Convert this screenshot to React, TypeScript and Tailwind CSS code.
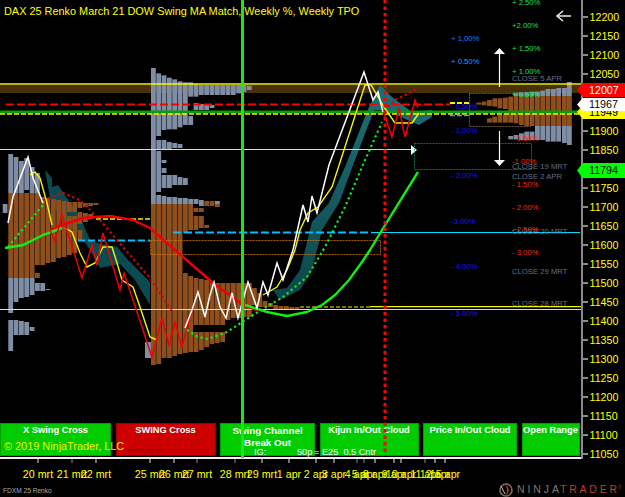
import React from "react";

type Seg = [number, number, string];
const GRAY = "#7f8ea5";
const BROWN = "#8f4f1d";

const z1 = (v: number) => v / 3;

const leftProfile: [number, Seg[]][] = [
  [2.7, [[204, 213, GRAY]]],
  [8.3, [[154, 193, GRAY], [193, 278, BROWN], [278, 313, GRAY], [320, 351, GRAY]]],
  [13.6, [[157, 193, GRAY], [193, 278, BROWN], [278, 302, GRAY], [320, 335, GRAY]]],
  [19, [[161, 193, GRAY], [193, 278, BROWN], [278, 298, GRAY], [321, 335, GRAY]]],
  [24.3, [[158, 190, GRAY], [193, 278, BROWN], [278, 297, GRAY], [322, 335, GRAY]]],
  [29.7, [[167, 193, GRAY], [193, 278, BROWN], [278, 295, GRAY], [327, 331, GRAY]]],
  [35, [[173, 193, GRAY], [193, 265, BROWN], [273, 278, BROWN], [283, 291, GRAY]]],
  [40.3, [[197, 265, BROWN], [283, 291, GRAY]]],
  [45.6, [[198, 263, BROWN], [289, 290, GRAY]]],
  [51, [[199, 262, BROWN]]],
  [56.3, [[200, 258, BROWN]]],
  [61.7, [[201, 257, BROWN]]],
  [67, [[202, 212, BROWN], [216, 255, BROWN]]],
  [72.3, [[202, 212, BROWN], [216, 253, BROWN]]],
  [77.6, [[202, 208, BROWN], [212, 224, BROWN], [230, 240, BROWN]]],
  [83, [[203, 207, BROWN], [213, 222, BROWN]]],
  [88.3, [[203, 206, BROWN], [214, 219, BROWN]]],
  [93.6, [[203, 205, BROWN], [216, 218, BROWN]]],
];

const midTopBots: [number, number][] = [
  [220, 408], [226, 390], [233, 388], [238, 388], [244, 382], [247, 375], [247, 290], [252, 290], [255, 285],
  [255, 285], [255, 285], [255, 285], [255, 285], [255, 285], [255, 285], [255, 280], [255, 276], [257, 270],
];

const midCols: [number, Seg[]][] = [
  [151, [[68, 204, GRAY], [204, 365, BROWN]]],
  ...midTopBots.map(([t, b], i): [number, Seg[]] => {
    const x = 156.3 + i * 5.33;
    const segs: Seg[] = [[z1(t), z1(b), GRAY]];
    return [x, segs];
  }),
];

const midExtra: [number, number, number, string][] = [
  [1, 140, 149, GRAY], [1, 151, 192, GRAY], [1, 195, 204, GRAY], [1, 204, 364, BROWN],
  [2, 140, 149, GRAY], [2, 160, 163, GRAY], [2, 168, 173, GRAY], [2, 175, 188, GRAY], [2, 196, 204, GRAY], [2, 204, 358, BROWN],
  [3, 142, 149, GRAY], [3, 175, 188, GRAY], [3, 197, 204, GRAY], [3, 204, 358, BROWN],
  [4, 143, 148, GRAY], [4, 175, 185, GRAY], [4, 197, 204, GRAY], [4, 204, 262, BROWN], [4, 262, 356, BROWN],
  [5, 144, 148, GRAY], [5, 177, 185, GRAY], [5, 198, 204, GRAY], [5, 204, 262, BROWN], [5, 262, 354, BROWN],
  [6, 178, 185, GRAY], [6, 198, 204, GRAY], [6, 204, 233, BROWN], [6, 273, 353, BROWN],
  [7, 116, 125, GRAY], [7, 199, 204, GRAY], [7, 204, 230, BROWN], [7, 276, 352, BROWN],
  [8, 103, 110, GRAY], [8, 199, 204, GRAY], [8, 208, 212, BROWN], [8, 216, 230, BROWN], [8, 278, 325, BROWN], [8, 332, 352, BROWN],
  [9, 104, 110, GRAY], [9, 200, 206, GRAY], [9, 208, 212, BROWN], [9, 216, 228, BROWN], [9, 279, 325, BROWN], [9, 332, 350, BROWN],
  [10, 105, 110, GRAY], [10, 201, 206, BROWN], [10, 225, 228, BROWN], [10, 280, 325, BROWN], [10, 332, 347, BROWN],
  [11, 105, 108, GRAY], [11, 201, 206, BROWN], [11, 282, 325, BROWN], [11, 332, 344, BROWN],
  [12, 201, 204, GRAY], [12, 204, 207, BROWN], [12, 283, 325, BROWN], [12, 332, 343, BROWN],
  [13, 283, 325, BROWN], [13, 332, 342, BROWN],
  [14, 283, 320, BROWN], [15, 283, 318, BROWN], [16, 283, 318, BROWN], [17, 283, 317, BROWN], [18, 283, 317, BROWN],
];
const midTail: [number, number, number][] = [
  [246.6, 285, 310], [252, 288, 305], [257.3, 293, 307], [262.6, 301, 307], [268, 303, 307], [273.3, 305, 309], [278.6, 306, 309], [284, 306, 309], [289.3, 307, 309], [294.6, 307, 309],
];

const rightCols: [number, number, number, number, number, number, number][] = [
  [567, 82, 96, 96, 126, 126, 145],
  [562, 88, 96, 96, 126, 126, 143],
  [556.3, 88, 96, 96, 126, 126, 141.6],
  [551, 89, 96, 96, 126, 126, 141.6],
  [545.6, 89, 96, 96, 126, 126, 141.6],
  [540.3, 90.6, 96, 96, 126, 126, 140],
  [535, 91.6, 96, 96, 126, 126, 140],
  [529.6, 91.6, 96, 96, 126, 131.6, 140],
  [524.3, 92.3, 96, 96, 126, 131.6, 140],
  [519, 92.3, 96, 96, 125, 133.3, 140],
  [513.6, 92.6, 96, 96, 123.3, 135, 139.3],
  [508.3, 0, 0, 96.6, 122.6, 136, 139.3],
];

const rightBrown: [number, number, number, number, number][] = [
  [503, 97.6, 109, 114, 122.6],
  [497.6, 98.3, 108.3, 115, 122.6],
  [492.3, 98.3, 106.6, 116.6, 122.6],
  [487, 100, 106, 118.3, 122.6],
  [481.6, 101.6, 105.3, 0, 0],
  [476.3, 102.6, 104.6, 0, 0],
];

const pts = (a: [number, number][]) => a.map(([x, y]) => `${x},${y}`).join(" ");

const whiteLine1: [number, number][] = [[8, 223], [13, 197], [28, 157], [33, 178], [43, 203]];
const whiteLine2: [number, number][] = [[185, 328], [192, 310], [198, 292], [205, 317], [210, 295], [214, 282], [220, 307], [226, 318], [232, 293], [238, 318], [248, 282], [257, 308], [263, 282], [268, 295], [277, 263], [283, 280], [293, 250], [303, 205], [308, 222], [312, 196], [317, 213], [329, 165], [364, 72], [373, 100], [378, 92], [383, 112]];
const yellow1: [number, number][] = [[30, 175], [35, 172], [40, 178], [47, 203], [52, 225]];
const yellow2: [number, number][] = [[65, 228], [72, 232], [80, 253], [87, 267], [95, 263], [103, 247], [112, 247], [117, 263], [122, 280], [133, 287], [140, 307], [150, 337], [157, 340]];
const yellow3: [number, number][] = [[263, 295], [277, 287], [287, 270], [295, 250], [300, 230], [308, 213], [318, 207], [332, 187], [365, 85], [371, 85], [384, 107], [395, 123], [412, 123], [419, 113]];
const redZig1: [number, number][] = [[50, 230], [55, 242], [62, 215], [70, 240], [82, 278], [92, 245], [97, 265], [103, 233], [117, 280], [120, 290], [124, 273], [152, 357], [162, 318], [169, 345], [175, 322], [182, 347], [192, 310]];
const redZig2: [number, number][] = [[384, 113], [392, 137], [399, 108], [405, 137], [415, 100], [418, 108]];
const redCurve: [number, number][] = [[50, 230], [62, 225], [83, 218], [110, 216], [133, 220], [150, 228], [160, 237], [175, 250], [213, 283], [243, 305], [257, 310]];
const green1: [number, number][] = [[5, 248], [23, 245], [43, 235], [62, 228]];
const green2: [number, number][] = [[245, 305], [267, 312], [287, 316], [307, 312], [322, 305], [335, 295], [349, 280], [362, 262], [370, 250], [382, 230], [418, 172]];
const redDots: [number, number][] = [[43, 200], [63, 193], [80, 200], [100, 220], [123, 247], [150, 278], [173, 313]];
const redDots2: [number, number][] = [[388, 107], [395, 100], [405, 95], [417, 89]];
const greenDots1: [number, number][] = [[8, 247], [43, 205]];
const greenDots2: [number, number][] = [[187, 330], [198, 337], [208, 339], [227, 332], [253, 315], [283, 297], [307, 277], [325, 247], [345, 207], [362, 167], [382, 122]];

const tealLeft: [number, number][] = [[45, 170], [52, 178], [52, 187], [58, 185], [80, 217], [90, 240], [97, 243], [117, 247], [128, 260], [150, 282], [150, 305], [135, 280], [120, 264], [100, 268], [90, 250], [78, 232], [62, 222], [50, 198]];
const tealRight: [number, number][] = [[273, 290], [287, 288], [300, 270], [312, 222], [329, 203], [345, 167], [369, 107], [380, 85], [392, 97], [412, 112], [432, 110], [432, 117], [419, 125], [385, 110], [374, 110], [355, 160], [339, 203], [322, 230], [312, 270], [300, 290], [280, 300]];

const blueTexts: [string, number, number, string][] = [
  ["+ 1,00%", 451, 41, "#1e7fff"],
  ["+ 0.50%", 451, 64, "#10a5ff"],
  ["- 0.50%", 451, 109, "#1414ff"],
  ["- 1,00%", 451, 133, "#1414ff"],
  ["- 2.00%", 451, 178, "#1414ff"],
  ["-3.00%", 451, 224, "#1414ff"],
  ["- 4.00%", 451, 269, "#1414ff"],
  ["- 5.00%", 451, 315.5, "#1414ff"],
];
const greenTexts: [string, number][] = [["+ 2.50%", 5], ["+2.00%", 28], ["+ 1.50%", 51], ["+ 1.00%", 74], ["+ 0.50%", 97]];
const redTexts: [string, number, number][] = [["-0.50%", 514, 141], ["-1.00%", 512, 164], ["- 1.50%", 512, 187], ["- 2.00%", 512, 210], ["- 2.50%", 512, 232], ["- 3.00%", 512, 255]];
const closeTexts: [string, number][] = [["CLOSE 5 APR", 81], ["CLOSE 19 MRT", 169], ["CLOSE 2 APR", 179], ["CLOSE 20 MRT", 234], ["CLOSE 29 MRT", 274], ["CLOSE 28 MRT", 306]];

const timeLabels: [string, number][] = [
  ["20 mrt", 38], ["21 mrt", 72], ["22 mrt", 96], ["25 mrt", 150], ["26 mrt", 174], ["27 mrt", 197], ["28 mrt", 235], ["29 mrt", 262],
  ["1 apr", 289], ["2 apr", 316], ["3 apr", 334], ["4 apr", 357], ["5 apr", 364], ["8 apr", 375], ["9 apr", 394], ["10 apr", 401], ["11 apr", 425], ["12 apr", 435], ["15 apr", 445],
];
const grayTicks = new Set([72, 197, 235, 357, 364, 425]);

const prices = [12200, 12150, 12100, 12050, 12000, 11950, 11900, 11850, 11800, 11750, 11700, 11650, 11600, 11550, 11500, 11450, 11400, 11350, 11300, 11250, 11200, 11150, 11100, 11050];

const tagShape = "[clip-path:polygon(0_50%,12%_0,100%_0,100%_100%,12%_100%)]";

function Tag({ top, h, bg, fg, text }: { top: string; h: string; bg: string; fg: string; text: string }) {
  return (
    <div className={`absolute left-[577px] ${top} ${h} w-[48px] ${bg} ${fg} ${tagShape} flex items-center pl-[12px] text-[10.7px] leading-none`}>
      {text}
    </div>
  );
}

function Btn({ w, red, children }: { w: string; red?: boolean; children: React.ReactNode }) {
  return (
    <div className={`${w} h-[33px] shrink-0 border whitespace-nowrap ${red ? "bg-[#cc0000] border-[#990000]" : "bg-[#00cc00] border-[#00a000]"} flex flex-col items-center text-white font-bold text-[9.3px] leading-[11px] pt-[1px] text-center`}>
      {children}
    </div>
  );
}

export default function App() {
  return (
    <div className="w-[625px] h-[497px] bg-black relative overflow-hidden font-['Liberation_Sans',Arial,sans-serif] flex flex-col">
      <div className="flex h-[459px] shrink-0">
        <div className="relative w-[581px] h-[459px] shrink-0 border-b-2 border-[#f0f0f0] flex flex-col justify-end pb-[1px]">
          <div className="flex gap-[4.5px]">
            <Btn w="w-[111px]">X Swing Cross</Btn>
            <Btn w="w-[100px]" red>SWING Cross</Btn>
            <Btn w="w-[95px]"><span className="text-[9.8px] leading-[12px]">Swing Channel</span><span className="text-[9.8px] leading-[12px]">Break Out</span></Btn>
            <Btn w="w-[99px]">Kijun In/Out Cloud</Btn>
            <Btn w="w-[94px]">Price In/Out Cloud</Btn>
            <Btn w="w-[58px]">Open Range</Btn>
          </div>
          <svg className="absolute left-0 top-0" width="581" height="458" viewBox="0 0 581 458">
            <defs>
              <linearGradient id="tealGrad" x1="0" y1="0" x2="0" y2="1">
                <stop offset="0" stopColor="#1e7076" />
                <stop offset="1" stopColor="#0c464c" />
              </linearGradient>
            </defs>
            <rect x="0" y="85" width="581" height="8" fill="#4a3008" />

            <polygon points={pts(tealLeft)} fill="#0b4a50" />
            <polygon points={pts(tealRight)} fill="url(#tealGrad)" />

            {leftProfile.map(([x, segs]) =>
              segs.map(([a, b, c], i) => <rect key={`${x}-${i}`} x={x} y={a} width="4.8" height={b - a} fill={c} />)
            )}
            {midCols.map(([x, segs]) =>
              segs.map(([a, b, c], i) => <rect key={`${x}-${i}`} x={x} y={a} width="4.8" height={b - a} fill={c} />)
            )}
            {midExtra.map(([k, a, b, c], i) => (
              <rect key={`e${i}`} x={151 + k * 5.33} y={a} width="4.8" height={b - a} fill={c} />
            ))}
            {midTail.map(([x, a, b], i) => (
              <rect key={`t${i}`} x={x} y={a} width="4.8" height={b - a} fill={BROWN} />
            ))}
            <rect x="145" y="342" width="6" height="16" fill={GRAY} />

            {rightCols.map(([x, gt, gb, bt, bb, lt, lb], i) => (
              <g key={`r${i}`}>
                {gt > 0 && <rect x={x} y={gt} width="4.8" height={gb - gt} fill={GRAY} />}
                <rect x={x} y={bt} width="4.8" height={bb - bt} fill={BROWN} />
                <rect x={x} y={lt} width="4.8" height={lb - lt} fill={GRAY} />
              </g>
            ))}
            {rightBrown.map(([x, a, b, c, d], i) => (
              <g key={`rb${i}`}>
                <rect x={x} y={a} width="4.8" height={b - a} fill={BROWN} />
                {d > 0 && <rect x={x} y={c} width="4.8" height={d - c} fill={BROWN} />}
              </g>
            ))}

            <line x1="0" x2="581" y1="84" y2="84" stroke="#f5f500" strokeWidth="1.6" />
            <line x1="6" x2="450" y1="104.5" y2="104.5" stroke="#ff0000" strokeWidth="2" strokeDasharray="8 3" />
            <line x1="0" x2="581" y1="112" y2="112" stroke="#0a9a0a" strokeWidth="3" />
            <line x1="0" x2="581" y1="114" y2="114" stroke="#f5f500" strokeWidth="1.5" strokeDasharray="5 2" />
            <line x1="450" x2="470" y1="103" y2="103" stroke="#f5f500" strokeWidth="2" strokeDasharray="5 2" />
            <line x1="450" x2="470" y1="115.5" y2="115.5" stroke="#00bfff" strokeWidth="1.6" strokeDasharray="5 2" />
            <line x1="0" x2="412" y1="149.5" y2="149.5" stroke="#d8d8d8" strokeWidth="1.2" />
            <polygon points="411,145 417,150 411,155" fill="#f2f2f2" />
            <line x1="96" x2="150" y1="219" y2="219" stroke="#f5f500" strokeWidth="1.3" strokeDasharray="5 2" />
            <line x1="78" x2="150" y1="240.5" y2="240.5" stroke="#00bfff" strokeWidth="2" strokeDasharray="7 3" />
            <line x1="173" x2="372" y1="232.5" y2="232.5" stroke="#00bfff" strokeWidth="2" strokeDasharray="8 3" />
            <line x1="372" x2="580" y1="232.5" y2="232.5" stroke="#00dfff" strokeWidth="1.2" />
            <rect x="150.5" y="240.5" width="230" height="14" fill="none" stroke="#d97a10" strokeWidth="0.8" strokeDasharray="2 1" />
            <line x1="0" x2="581" y1="309.5" y2="309.5" stroke="#f5f500" strokeWidth="1.2" />
            <line x1="370" x2="581" y1="306.7" y2="306.7" stroke="#f5f500" strokeWidth="1.2" />
            <line x1="300" x2="370" y1="307" y2="307" stroke="#f5f500" strokeWidth="1.2" strokeDasharray="4 2" />

            <rect x="414.5" y="143.5" width="117" height="26" fill="none" stroke="#0c8f6a" strokeWidth="0.8" strokeDasharray="2 1" />
            <rect x="469.5" y="93.5" width="61" height="33" fill="none" stroke="#8a6a55" strokeWidth="0.8" strokeDasharray="2 1" />

            <polyline points={pts(redCurve)} fill="none" stroke="#f00000" strokeWidth="2.4" strokeLinejoin="round" />
            <polyline points={pts(green1)} fill="none" stroke="#11ee11" strokeWidth="2.4" />
            <polyline points={pts(green2)} fill="none" stroke="#11ee11" strokeWidth="2.4" strokeLinejoin="round" />
            <polyline points={pts(yellow1)} fill="none" stroke="#f5f500" strokeWidth="1.4" />
            <polyline points={pts(yellow2)} fill="none" stroke="#f5f500" strokeWidth="1.4" />
            <polyline points={pts(yellow3)} fill="none" stroke="#f5f500" strokeWidth="1.4" />
            <polyline points={pts(redZig1)} fill="none" stroke="#f00000" strokeWidth="1.5" />
            <polyline points={pts(redZig2)} fill="none" stroke="#f00000" strokeWidth="1.5" />
            <polyline points={pts(redDots)} fill="none" stroke="#e00000" strokeWidth="2.2" strokeDasharray="2.2 3" />
            <polyline points={pts(redDots2)} fill="none" stroke="#e00000" strokeWidth="2.2" strokeDasharray="2.2 3" />
            <polyline points={pts(greenDots1)} fill="none" stroke="#11ee11" strokeWidth="2.2" strokeDasharray="2.2 3" />
            <polyline points={pts(greenDots2)} fill="none" stroke="#11ee11" strokeWidth="2.2" strokeDasharray="2.2 3" />
            <polyline points={pts(whiteLine1)} fill="none" stroke="#ffffff" strokeWidth="1.5" />
            <polyline points={pts(whiteLine2)} fill="none" stroke="#ffffff" strokeWidth="1.5" />

            <line x1="242.5" x2="242.5" y1="0" y2="458" stroke="#18e818" strokeWidth="3" />
            <line x1="385" x2="385" y1="0" y2="453" stroke="#ff0000" strokeWidth="3" strokeDasharray="3.5 3" />

            <line x1="499.5" x2="499.5" y1="52" y2="87" stroke="#fff" strokeWidth="1.2" />
            <polygon points="494,54 505,54 499.5,48" fill="#fff" />
            <line x1="499.5" x2="499.5" y1="131" y2="161" stroke="#fff" strokeWidth="1.2" />
            <polygon points="494,160 505,160 499.5,166" fill="#fff" />
            <line x1="557" x2="571" y1="16" y2="16" stroke="#f0efe0" strokeWidth="1.5" />
            <polyline points="563,11 557,16 563,21" fill="none" stroke="#f0efe0" strokeWidth="1.5" />

            <text x="4" y="15" fontSize="10.9" fill="#ffff00">DAX 25 Renko March 21 DOW Swing MA Match, Weekly %, Weekly TPO</text>
            {blueTexts.map(([t, x, y, c]) => (
              <text key={t + y} x={x} y={y} fontSize="7.7" fill={c}>{t}</text>
            ))}
            {greenTexts.map(([t, y]) => (
              <text key={t} x="512" y={y} fontSize="7.7" fill="#13e05a">{t}</text>
            ))}
            {redTexts.map(([t, x, y]) => (
              <text key={t} x={x} y={y} fontSize="7.7" fill="#f03010">{t}</text>
            ))}
            {closeTexts.map(([t, y]) => (
              <text key={t} x="512" y={y} fontSize="7.7" fill="#5f708a">{t}</text>
            ))}
            <text x="4" y="450" fontSize="10.9" fill="#f0f000">© 2019 NinjaTrader, LLC</text>
            <text x="125" y="452" fontSize="5.5" fill="#8a0000">www.fin-alg.com</text>
            <text x="254" y="455" fontSize="9.2" fill="#ffffff">IG:</text>
            <text x="297" y="455" fontSize="9.2" fill="#ffffff">50p</text>
            <text x="314" y="455" fontSize="9.2" fill="#ffffff">= E25{"\u00a0\u00a0"}0.5 Cntr</text>
          </svg>
        </div>

        <div className="w-[44px] h-[459px] shrink-0 border-l-2 border-[#8a8a8a] flex flex-col pt-[7.5px]">
          {prices.map((p) => (
            <div key={p} className="h-[19px] shrink-0 flex items-center gap-[1.5px]">
              <div className="w-[5px] h-[2px] bg-[#8a8a8a]" />
              <span className="text-[10.7px] leading-none text-[#ffff00]">{p}</span>
            </div>
          ))}
        </div>
      </div>

      <div className="relative flex-1">
        <svg className="absolute left-0 top-0" width="625" height="38" viewBox="0 0 625 38">
          {timeLabels.map(([t, x]) => (
            <g key={t}>
              <line x1={x} x2={x} y1="0" y2="4" stroke={grayTicks.has(x) ? "#8a8a8a" : "#e8e8e8"} strokeWidth="1" />
              <text x={x} y="19" fontSize="10.7" textAnchor="middle" fill="#ffff00">{t}</text>
            </g>
          ))}
          <text x="3" y="33.5" fontSize="6.6" fill="#a8a8a8">FDXM 25 Renko</text>
          <circle cx="506" cy="31" r="6" fill="none" stroke="#7a6a62" strokeWidth="1.6" />
          <path d="M505 25.5 C 510 28, 510 34, 505 36.5 C 508 33, 507.5 29, 505 25.5 Z" fill="#b23a20" />
          <path d="M501 27 L 505 35" stroke="#c8c0b8" strokeWidth="1" />
          <text x="517" y="34" fontSize="10.5" fill="#7a7a7a" textLength="42">NINJA</text>
          <text x="560" y="34" fontSize="10.5" fill="#b5442a" textLength="57">TRADER</text>
          <text x="618" y="30" fontSize="4.5" fill="#b5442a">®</text>
        </svg>
      </div>

      <Tag top="top-[105px]" h="h-[14px]" bg="bg-[#ffff00]" fg="text-black" text="11949" />
      <Tag top="top-[83px]" h="h-[14px]" bg="bg-[#ff0000]" fg="text-white" text="12007" />
      <Tag top="top-[98px]" h="h-[13px]" bg="bg-white" fg="text-black" text="11967" />
      <Tag top="top-[163px]" h="h-[15px]" bg="bg-[#00ff00]" fg="text-black" text="11794" />
    </div>
  );
}
